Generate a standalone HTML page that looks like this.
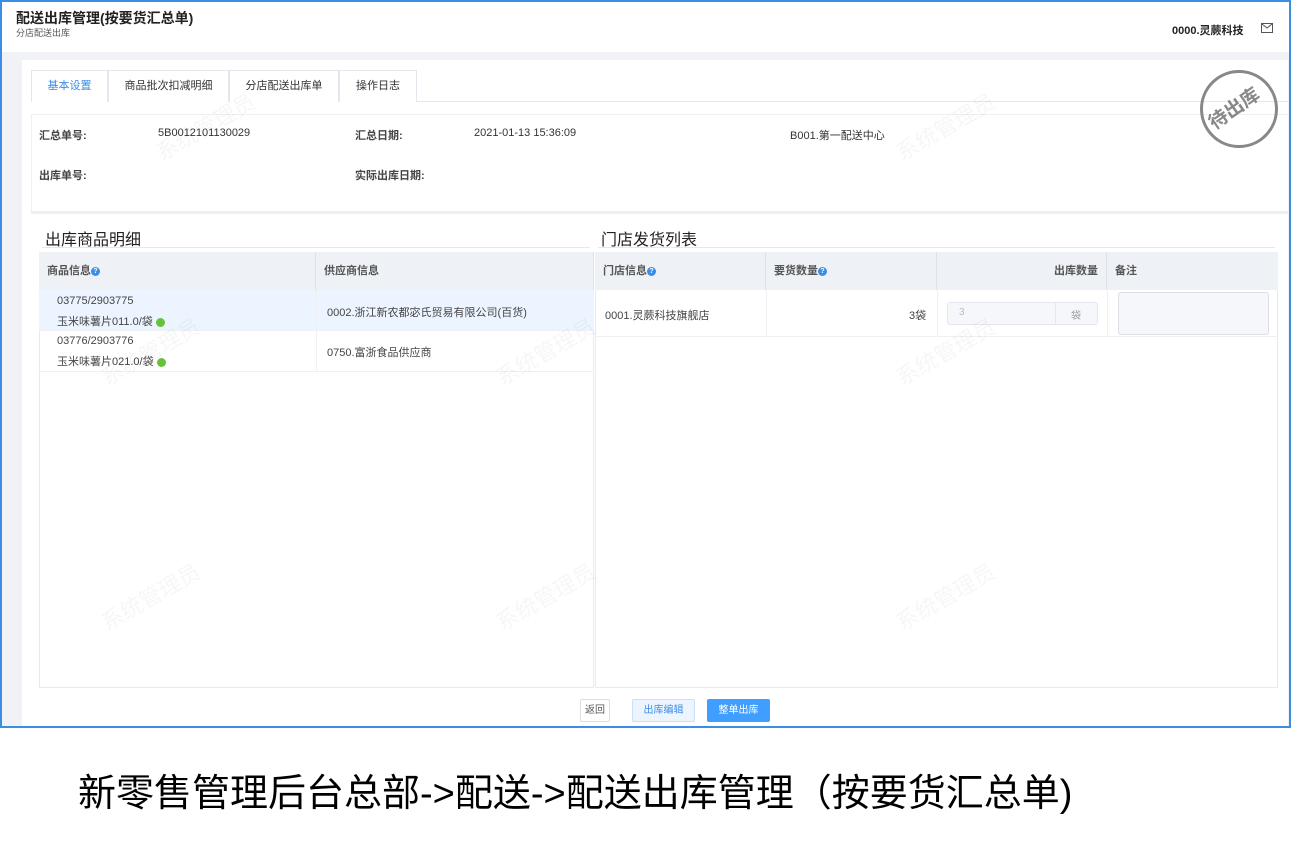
<!DOCTYPE html>
<html><head><meta charset="utf-8"><style>
*{margin:0;padding:0;box-sizing:border-box}
body{width:1291px;height:860px;background:#fff;font-family:"Liberation Sans","Noto Sans CJK SC",sans-serif;position:relative;overflow:hidden;color:#333}
.a{position:absolute}
.frame{left:0;top:0;width:1291px;height:728px;border:2px solid #3a8ee6;background:#f0f2f5}
.hdr{left:2px;top:2px;width:1287px;height:50px;background:#fff}
.panel{left:22px;top:60px;width:1266px;height:666px;background:#fff}
.tab{top:70px;height:32px;border:1px solid #e4e7ed;border-bottom:none;font-size:11px;line-height:31px;text-align:center;color:#333;background:#fff}
.lbl{font-size:11px;font-weight:bold;color:#444}
.val{font-size:11px;color:#333}
.th{background:#eef1f6;height:38px;top:252px;font-size:11px;font-weight:bold;color:#555;line-height:38px;padding-left:8px;border-right:1px solid #dde1e8}
.q{display:inline-block;width:9px;height:9px;border-radius:50%;background:#3a8ee6;color:#fff;font-size:7px;line-height:9px;text-align:center;vertical-align:middle}
.g{display:inline-block;width:9px;height:9px;border-radius:50%;background:#67c23a;vertical-align:middle;margin-left:3px}
.td{font-size:11px;color:#444}
.wm{font-size:22px;color:rgba(0,0,0,0.035);transform:rotate(-30deg);white-space:nowrap}
.btn{top:699px;height:23px;font-size:10px;line-height:21px;text-align:center;border-radius:2px}
</style></head><body>
<div class="a frame"></div>
<div class="a hdr"></div>
<div class="a" style="left:16px;top:8px;font-size:14px;font-weight:bold;color:#222">配送出库管理(按要货汇总单)</div>
<div class="a" style="left:16px;top:26px;font-size:9px;color:#555">分店配送出库</div>
<div class="a" style="left:1172px;top:22px;font-size:11px;font-weight:bold;color:#222">0000.灵蕨科技</div>
<svg class="a" style="left:1261px;top:23px" width="12" height="10"><rect x="0.5" y="0.5" width="11" height="9" fill="none" stroke="#555"/><path d="M1 1L6 5L11 1" fill="none" stroke="#555"/></svg>
<div class="a panel"></div>
<div class="a" style="left:31px;top:101px;width:1257px;height:1px;background:#e4e7ed"></div>
<div class="a tab" style="left:31px;width:77px;color:#3a8ee6">基本设置</div>
<div class="a tab" style="left:108px;width:121px">商品批次扣减明细</div>
<div class="a tab" style="left:229px;width:110px">分店配送出库单</div>
<div class="a tab" style="left:339px;width:78px">操作日志</div>
<div class="a" style="left:31px;top:114px;width:1257px;height:98px;border:1px solid #eef0f4;border-right:none"></div>
<div class="a lbl" style="left:39px;top:127px">汇总单号:</div>
<div class="a val" style="left:158px;top:127px">5B0012101130029</div>
<div class="a lbl" style="left:355px;top:127px">汇总日期:</div>
<div class="a val" style="left:474px;top:127px">2021-01-13 15:36:09</div>
<div class="a val" style="left:790px;top:127px">B001.第一配送中心</div>
<div class="a lbl" style="left:39px;top:167px">出库单号:</div>
<div class="a lbl" style="left:355px;top:167px">实际出库日期:</div>
<div class="a" style="left:1200px;top:70px;width:78px;height:78px;border:3px solid #888;border-radius:50%"></div>
<div class="a" style="left:1205px;top:94px;font-size:19px;font-weight:bold;color:#888;transform:rotate(-35deg)">待出库</div>
<div class="a" style="left:31px;top:212px;width:1257px;height:476px;border-top:2px solid #eef0f4"></div>
<div class="a" style="left:45px;top:226px;font-size:16px;color:#222">出库商品明细</div>
<div class="a" style="left:42px;top:247px;width:548px;height:1px;background:#e4e7ed"></div>
<div class="a" style="left:601px;top:226px;font-size:16px;color:#222">门店发货列表</div>
<div class="a" style="left:598px;top:247px;width:677px;height:1px;background:#e4e7ed"></div>
<div class="a" style="left:39px;top:252px;width:555px;height:436px;border:1px solid #e8eaee"></div>
<div class="a" style="left:595px;top:252px;width:683px;height:436px;border:1px solid #e8eaee"></div>
<div class="a th" style="left:39px;width:277px">商品信息<span class="q">?</span></div>
<div class="a th" style="left:316px;width:278px">供应商信息</div>
<div class="a" style="left:39px;top:290px;width:555px;height:41px;background:#ecf5ff;border-bottom:1px solid #eef0f4"></div>
<div class="a" style="left:39px;top:331px;width:555px;height:41px;border-bottom:1px solid #eef0f4"></div>
<div class="a" style="left:316px;top:290px;width:1px;height:82px;background:#eef0f4"></div>
<div class="a td" style="left:57px;top:295px">03775/2903775</div>
<div class="a td" style="left:57px;top:313px">玉米味薯片011.0/袋<span class="g"></span></div>
<div class="a td" style="left:327px;top:304px">0002.浙江新农都宓氏贸易有限公司(百货)</div>
<div class="a td" style="left:57px;top:335px">03776/2903776</div>
<div class="a td" style="left:57px;top:353px">玉米味薯片021.0/袋<span class="g"></span></div>
<div class="a td" style="left:327px;top:344px">0750.富浙食品供应商</div>
<div class="a th" style="left:595px;width:171px">门店信息<span class="q">?</span></div>
<div class="a th" style="left:766px;width:171px">要货数量<span class="q">?</span></div>
<div class="a th" style="left:937px;width:170px;text-align:right;padding-right:8px">出库数量</div>
<div class="a th" style="left:1107px;width:171px;border-right:none">备注</div>
<div class="a" style="left:595px;top:290px;width:683px;height:47px;border-bottom:1px solid #eef0f4"></div>
<div class="a" style="left:766px;top:290px;width:1px;height:47px;background:#eef0f4"></div>
<div class="a" style="left:937px;top:290px;width:1px;height:47px;background:#eef0f4"></div>
<div class="a" style="left:1107px;top:290px;width:1px;height:47px;background:#eef0f4"></div>
<div class="a td" style="left:605px;top:307px">0001.灵蕨科技旗舰店</div>
<div class="a td" style="left:909px;top:307px">3袋</div>
<div class="a" style="left:947px;top:302px;width:151px;height:23px;border:1px solid #e4e7ed;border-radius:3px;background:#f5f7fa"></div>
<div class="a" style="left:1055px;top:302px;width:1px;height:23px;background:#e4e7ed"></div>
<div class="a" style="left:959px;top:307px;font-size:10px;color:#bbb">3</div>
<div class="a" style="left:1071px;top:307px;font-size:10px;color:#999">袋</div>
<div class="a" style="left:1118px;top:292px;width:151px;height:43px;border:1px solid #dcdfe6;border-radius:3px;background:#f5f7fa"></div>
<div class="a wm" style="left:150px;top:110px">系统管理员</div>
<div class="a wm" style="left:890px;top:110px">系统管理员</div>
<div class="a wm" style="left:95px;top:335px">系统管理员</div>
<div class="a wm" style="left:490px;top:335px">系统管理员</div>
<div class="a wm" style="left:890px;top:335px">系统管理员</div>
<div class="a wm" style="left:95px;top:580px">系统管理员</div>
<div class="a wm" style="left:490px;top:580px">系统管理员</div>
<div class="a wm" style="left:890px;top:580px">系统管理员</div>
<div class="a btn" style="left:580px;width:30px;border:1px solid #dcdfe6;color:#555;background:#fff">返回</div>
<div class="a btn" style="left:632px;width:63px;border:1px solid #c6e2ff;color:#3a8ee6;background:#ecf5ff">出库编辑</div>
<div class="a btn" style="left:707px;width:63px;border:1px solid #409eff;color:#fff;background:#409eff">整单出库</div>
<div class="a" style="left:78px;top:762px;font-size:38px;color:#000;white-space:nowrap">新零售管理后台总部-&gt;配送-&gt;配送出库管理（按要货汇总单)</div>
</body></html>
